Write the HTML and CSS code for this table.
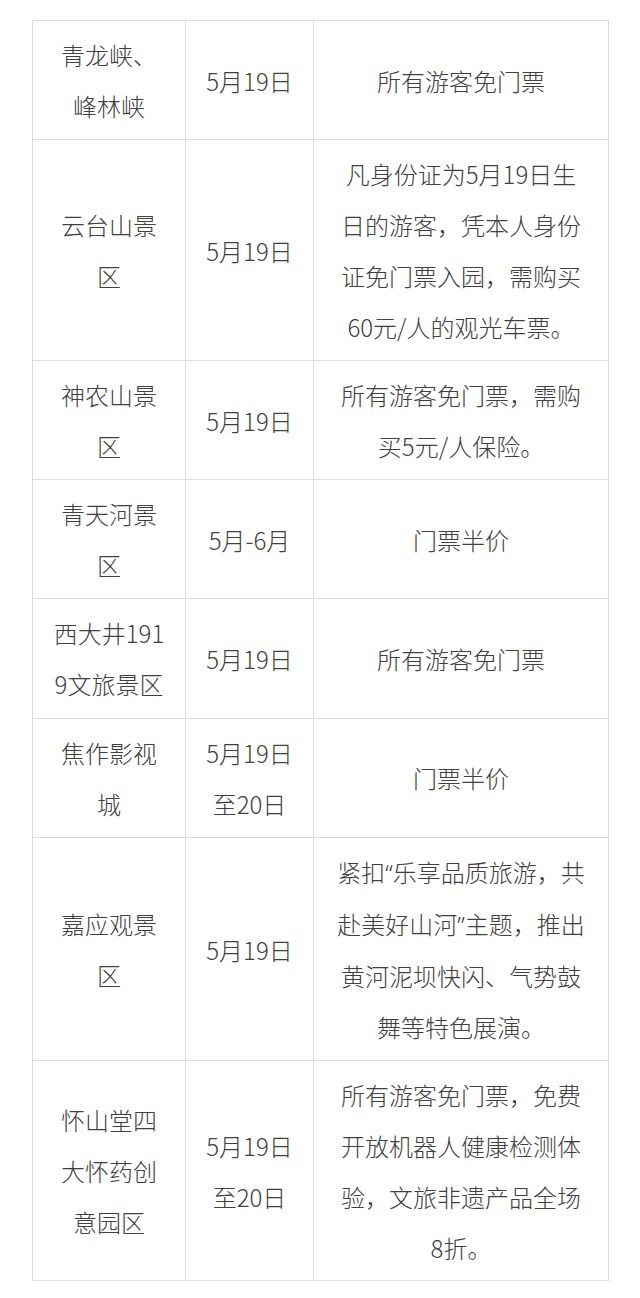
FILE: index.html
```html
<!DOCTYPE html>
<html lang="zh-CN">
<head>
<meta charset="utf-8">
<title>景区优惠</title>
<link rel="stylesheet" href="styles.css">
</head>
<body>
<table class="deals">
  <colgroup>
    <col class="c-name">
    <col class="c-date">
    <col class="c-desc">
  </colgroup>
  <tbody>
    <tr>
      <td>青龙峡、<br>峰林峡</td>
      <td>5月19日</td>
      <td>所有游客免门票</td>
    </tr>
    <tr>
      <td>云台山景<br>区</td>
      <td>5月19日</td>
      <td>凡身份证为5月19日生<br>日的游客，凭本人身份<br>证免门票入园，需购买<br>60元/人的观光车票。</td>
    </tr>
    <tr>
      <td>神农山景<br>区</td>
      <td>5月19日</td>
      <td>所有游客免门票，需购<br>买5元/人保险。</td>
    </tr>
    <tr>
      <td>青天河景<br>区</td>
      <td>5月-6月</td>
      <td>门票半价</td>
    </tr>
    <tr class="tall">
      <td>西大井191<br>9文旅景区</td>
      <td>5月19日</td>
      <td>所有游客免门票</td>
    </tr>
    <tr class="tall">
      <td>焦作影视<br>城</td>
      <td>5月19日<br>至20日</td>
      <td>门票半价</td>
    </tr>
    <tr>
      <td>嘉应观景<br>区</td>
      <td>5月19日</td>
      <td>紧扣<span class="q">“</span>乐享品质旅游，共<br>赴美好山河<span class="q">”</span>主题，推出<br>黄河泥坝快闪、气势鼓<br>舞等特色展演。</td>
    </tr>
    <tr class="short">
      <td>怀山堂四<br>大怀药创<br>意园区</td>
      <td>5月19日<br>至20日</td>
      <td>所有游客免门票，免费<br>开放机器人健康检测体<br>验，文旅非遗产品全场<br>8折。</td>
    </tr>
  </tbody>
</table>
</body>
</html>
```
FILE: styles.css
```css
html, body {
  margin: 0;
  padding: 0;
  background: #ffffff;
}

body {
  padding: 20px 32px 0 32px;
  font-family: "Noto Sans CJK SC", "Noto Sans", sans-serif;
  color: #404040;
}

.deals {
  width: 576px;
  border-collapse: collapse;
  table-layout: fixed;
  border: 1px solid #dcdcdc;
}

.c-name { width: 153px; }
.c-date { width: 128px; }
.c-desc { width: 295px; }

.deals td {
  border: 1px solid #dcdcdc;
  padding: 8px 6px;
  font-size: 24px;
  font-weight: 300;
  line-height: 51px;
  text-align: center;
  vertical-align: middle;
  white-space: nowrap;
}

.deals tr.tall td {
  padding-top: 8.3px;
  padding-bottom: 8.3px;
}

.deals tr.short td {
  padding-top: 7.5px;
  padding-bottom: 7.5px;
}

.q {
  font-family: "Noto Sans", sans-serif;
}
```
